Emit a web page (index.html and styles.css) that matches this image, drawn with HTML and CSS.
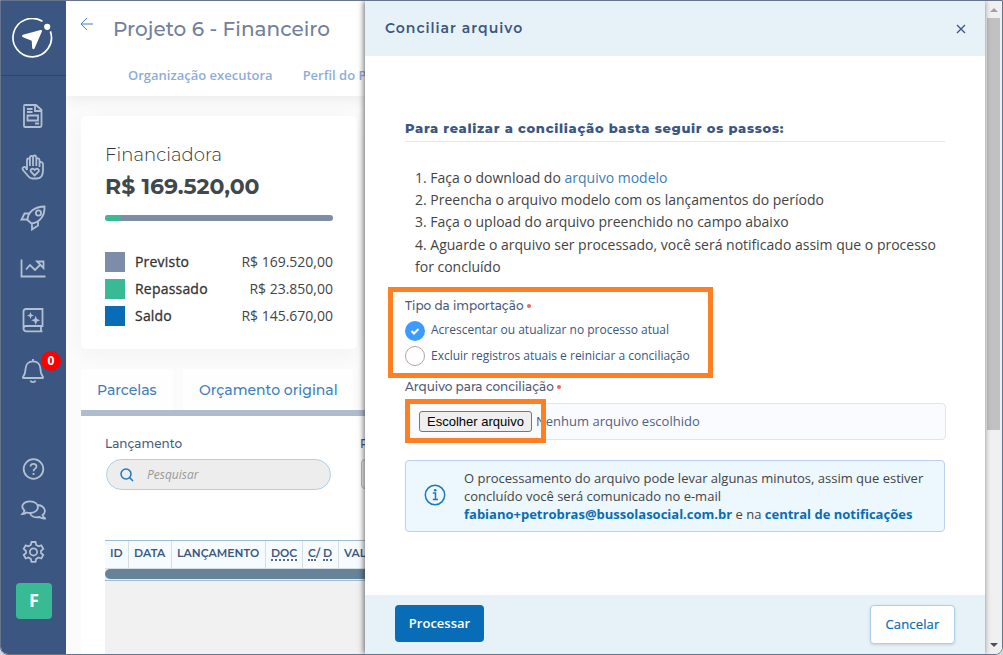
FILE: index.html
```html
<!DOCTYPE html>
<html lang="pt-BR">
<head>
    <meta charset="UTF-8">
    <meta name="viewport" content="width=device-width, initial-scale=1.0">
    <title>Projeto 6 - Financeiro</title>
    <link rel="stylesheet" href="styles.css">
</head>
<body>
<div class="window">
    <nav class="sidebar">
        <a class="logo">
            <svg width="42" height="42" viewBox="0 0 42 42">
                <path d="M30.5 3.4A19.2 19.2 0 1 0 38.4 13.4" fill="none" stroke="#fff" stroke-width="1.7"/>
                <circle cx="35.200" cy="8.800" r="3.1" fill="#fff"/>
                <path d="M30 13.300L22.500 30.500Q21 32.300 20.200 30L19.700 22.800L11 19.200Q9 18 11 16.800L28.500 12Q30.500 11.800 30 13.300Z" fill="#fff"/>
            </svg>
        </a>
        <div class="menu">
            <svg width="26" height="26" viewBox="0 0 26 26"><path d="M4.500 3Q4 3 4 4V23Q4 24 5 24H20Q21.500 24 21.500 22.500V7L16 2H5Q4 2 4 3M15 2V8H21.500M7 6H12.500M7 9H12.500M7.500 12.500H18V17.500H7.500ZM15 20.500H19"/></svg>
            <svg width="26" height="26" viewBox="0 0 26 26"><path d="M7 16V6Q7 4.300 8.400 4.300T9.900 6V12M9.900 6V3.500Q10 2 11.500 2T13 3.500V12M13 3.500Q13.200 1.300 14.700 1.500T16.300 3.500V12M16.300 5.500Q16.500 4 18 4.300T19.500 6V13M19.500 9Q20.500 7.500 21.700 8.200T23 10V16C23 21 21.500 24.500 17 24.500H12.500Q10 24.500 8.500 22.500L3 16Q2 14 3.400 13.200T6 14L7 16M14.700 21.500L10.900 17.700C9.500 15.500 12.500 13.500 14.700 16C17 13.500 20 15.500 18.500 17.700Z"/></svg>
            <svg width="26" height="26" viewBox="0 0 26 26"><path d="M7.500 15C7.500 7 15 1.500 24.500 1.500C25 10 20.500 17.500 11.500 18.500ZM9.500 8.500H4.500L1.500 14.500H7.500M18 16.500V20.500L12 24.500V18.500"/><circle cx="18.500" cy="8" r="2.600"/></svg>
            <svg width="26" height="26" viewBox="0 0 26 26"><path d="M1.500 3.500V20.500H25.500M6 13.500L10 9L15 14L20.500 8.500M17 5.500H23.500V12Z"/></svg>
            <svg width="26" height="26" viewBox="0 0 26 26"><path d="M21 19H6Q3.500 19 3.500 21.500T6 24.300H22.500M3.500 21.500V4.500Q3.500 2 6 2H22.500V19H21V24"/><path class="solid" d="M10.500 5L11.500 7.600L14 8.500L11.500 9.400L10.500 12L9.500 9.400L7 8.500L9.500 7.600ZM15.700 8.800L17 12L20.200 13.300L17 14.600L15.700 18L14.400 14.600L11.200 13.300L14.400 12Z"/></svg>
            <div class="bell">
                <svg width="26" height="26" viewBox="0 0 26 26"><path d="M3.500 20Q2.500 20 3.100 18.800C5.500 16 5.400 13.500 5.600 10.500C5.900 6.500 8.500 3.300 13 3.300S20.100 6.500 20.400 10.500C20.600 13.500 20.500 16 22.900 18.800Q23.500 20 22.500 20ZM13 1V3.300M10.500 22.500C11 24.700 15 24.700 15.500 22.500"/></svg>
                <span class="badge">0</span>
            </div>
        </div>
        <div class="menu menu-bottom">
            <svg width="26" height="26" viewBox="0 0 26 26"><circle cx="13.500" cy="13" r="9.800"/><path d="M10.500 10.500C10.500 7 16.500 7 16.500 10.500C16.500 12.800 13.500 12.500 13.500 15.200M13.500 17V19"/></svg>
            <svg width="26" height="26" viewBox="0 0 26 26"><path d="M4.500 13.500C-0.500 9 4 4.300 10 4.300C20.500 4.300 20.500 16 10 16Q8 16 6.500 15.500C5.500 16.500 4 17 2.500 17Q4 15.500 4.500 13.500ZM18 8C25.500 9 26.500 15.500 22.500 18Q23 20.500 25.500 21.500Q22 22 19.500 20C15 21 11 19.500 10 16"/></svg>
            <svg width="26" height="26" viewBox="0 0 26 26"><path d="M11.500 4H15.500L16.200 7L18.500 8.300L21.300 7.400L23.300 10.900L21 13V15L23.300 17L21.300 20.500L18.500 19.500L16.200 20.900L15.500 23.800H11.500L10.800 20.900L8.500 19.500L5.700 20.500L3.700 17L6 15V13L3.700 10.900L5.700 7.400L8.500 8.300L10.800 7Z"/><circle cx="13.500" cy="13.900" r="3.600"/></svg>
            <span class="avatar">F</span>
        </div>
    </nav>

    <main class="page">
        <header class="page-header">
            <div class="title-row">
                <svg class="back" width="14" height="14" viewBox="0 0 14 14"><path d="M13 7H1M7 1L1 7L7 13"/></svg>
                <h1>Projeto 6 - Financeiro</h1>
            </div>
            <div class="nav-links">
                <a>Organização executora</a>
                <a class="profile-link">Perfil do Projeto</a>
            </div>
        </header>

        <section class="card">
            <h2>Financiadora</h2>
            <strong class="total">R$ 169.520,00</strong>
            <div class="progress"><div class="progress-bar" style="width: 7%"></div></div>
            <ul class="legend">
                <li><i class="planned"></i><b>Previsto</b><span>R$ 169.520,00</span></li>
                <li><i class="transferred"></i><b>Repassado</b><span>R$ 23.850,00</span></li>
                <li><i class="balance"></i><b>Saldo</b><span>R$ 145.670,00</span></li>
            </ul>
        </section>

        <div class="tabs">
            <a class="tab-first">Parcelas</a>
            <a class="tab-second">Orçamento original</a>
        </div>

        <section class="entries">
            <div class="filters">
                <div class="filter">
                    <label>Lançamento</label>
                    <div class="search">
                        <svg width="14" height="14" viewBox="0 0 14 14"><circle cx="6" cy="6" r="5"/><path d="M9.700 9.700L13 13"/></svg>
                        <span>Pesquisar</span>
                    </div>
                </div>
                <div class="filter">
                    <label>Período</label>
                    <div class="period"></div>
                </div>
            </div>
            <div class="table">
                <div class="table-head">
                    <span class="c-id">ID</span>
                    <span class="c-date">DATA</span>
                    <span class="c-entry">LANÇAMENTO</span>
                    <span class="c-doc"><abbr>DOC</abbr></span>
                    <span class="c-cd"><abbr>C</abbr>/ <abbr>D</abbr></span>
                    <span class="c-value">VALOR</span>
                </div>
                <div class="table-scroll"><div></div></div>
            </div>
        </section>
    </main>

    <aside class="drawer">
        <header class="drawer-header">
            <h3>Conciliar arquivo</h3>
            <svg width="10" height="10" viewBox="0 0 10 10"><path d="M1 1L9 9M9 1L1 9"/></svg>
        </header>
        <div class="drawer-body">
            <h4>Para realizar a conciliação basta seguir os passos:</h4>
            <div class="steps">
                <p>1. Faça o download do <a>arquivo modelo</a></p>
                <p>2. Preencha o arquivo modelo com os lançamentos do período</p>
                <p>3. Faça o upload do arquivo preenchido no campo abaixo</p>
                <p>4. Aguarde o arquivo ser processado, você será notificado assim que o processo for concluído</p>
            </div>
            <div class="import-type">
                <div class="field-label">Tipo da importação<i></i></div>
                <div class="radio">
                    <svg width="20" height="20" viewBox="0 0 20 20"><circle cx="10" cy="10" r="10" fill="#3d9bfd"/><path d="M6.500 10L9 12.500L13.500 8" fill="none" stroke="#fff" stroke-width="2"/></svg>
                    <span>Acrescentar ou atualizar no processo atual</span>
                </div>
                <div class="radio">
                    <svg width="20" height="20" viewBox="0 0 20 20"><circle cx="10" cy="10" r="9.500" fill="#fff" stroke="#b1a4a8"/></svg>
                    <span class="option-reset">Excluir registros atuais e reiniciar a conciliação</span>
                </div>
            </div>
            <div class="field-label file-label">Arquivo para conciliação<i></i></div>
            <div class="file">
                <button class="choose">Escolher arquivo</button>
                <span>Nenhum arquivo escolhido</span>
            </div>
            <div class="notice">
                <svg width="22" height="22" viewBox="0 0 22 22"><circle cx="11" cy="11" r="9.700"/><path d="M8.800 9H11.500V15.500M8.800 15.500H14"/><circle class="dot" cx="11.200" cy="6.200" r="1.300"/></svg>
                <p>O processamento do arquivo pode levar algunas minutos, assim que estiver concluído você será comunicado no e-mail<br><b>fabiano+petrobras@bussolasocial.com.br</b> e na <b>central de notificações</b></p>
            </div>
        </div>
        <footer class="drawer-footer">
            <button class="btn btn-primary">Processar</button>
            <button class="btn btn-cancel">Cancelar</button>
        </footer>
    </aside>

    <div class="scrollbar">
        <i class="arrow-up"></i>
        <div class="thumb"></div>
        <i class="arrow-down"></i>
    </div>
</div>
</body>
</html>
```
FILE: styles.css
```css
*, *::after {
    box-sizing: border-box;
}
body {
    margin: 0;
    background: #d5d9df;
    font-family: "Open Sans", sans-serif;
    color: #444;
}
h1, h2, h3, h4, p, ul {
    margin: 0;
    padding: 0;
}
button {
    font-family: inherit;
    padding: 0;
}
.window {
    display: flex;
    width: 1003px;
    height: 655px;
    border: 1px solid #66758d;
    border-radius: 0 0 8px 8px;
    overflow: hidden;
    background: #fff;
}

/* sidebar */
.sidebar {
    width: 65px;
    flex: none;
    display: flex;
    flex-direction: column;
    background: #3b5680;
}
.logo {
    height: 75px;
    padding: 17px 0 0 11px;
    border-bottom: 1px solid #2b4673;
}
.menu {
    display: flex;
    flex-direction: column;
    gap: 25px;
    padding: 27px 0 0 19px;
}
.menu svg {
    display: block;
    fill: none;
    stroke: #b3bfd2;
    stroke-width: 1.800;
}
.menu .solid {
    fill: #b3bfd2;
    stroke: none;
}
.bell {
    position: relative;
}
.badge {
    position: absolute;
    left: 21px;
    top: -7px;
    width: 20px;
    height: 20px;
    border-radius: 50%;
    background: #f00;
    color: #fff;
    font-size: 12px;
    font-weight: 700;
    line-height: 19px;
    text-align: center;
}
.menu-bottom {
    gap: 15px;
    padding-top: 72px;
}
.avatar {
    width: 36px;
    height: 36px;
    margin: 4px 0 0 -4px;
    border-radius: 4px;
    background: #38bb94;
    color: #fff;
    font-size: 18px;
    font-weight: 700;
    line-height: 35px;
    text-align: center;
}

/* page behind the drawer */
.page {
    width: 299px;
    flex: none;
    overflow: hidden;
    background: #fbfbfb;
}
.page-header {
    height: 95px;
    background: #fff;
    box-shadow: 0 2px 14px rgba(0, 0, 0, 0.08);
}
.title-row {
    display: flex;
    height: 57px;
    padding-left: 14px;
}
.back {
    margin-top: 16px;
    fill: none;
    stroke: #3f80bd;
}
h1 {
    margin-left: 19px;
    font: 500 20px/56px Montserrat, Inter, sans-serif;
    color: #71809e;
    letter-spacing: 0.020px;
    white-space: nowrap;
}
.nav-links {
    display: flex;
    padding-left: 62px;
    font-size: 13px;
    font-weight: 600;
    line-height: 35px;
    color: #8eaddb;
    white-space: nowrap;
}
.profile-link {
    margin-left: 30px;
}
.card {
    width: 276px;
    height: 233px;
    margin: 20px 0 0 15px;
    padding: 26px 24px 0;
    border-radius: 5px;
    background: #fff;
    box-shadow: 0 5px 22px rgba(0, 0, 0, 0.04);
}
h2 {
    font: 300 18px/26px Montserrat, Inter, sans-serif;
    color: #333;
    letter-spacing: 0.100px;
}
.total {
    display: block;
    font: 700 22px/37px Montserrat, Inter, sans-serif;
    color: #3f484c;
}
.progress {
    height: 6px;
    margin-top: 10px;
    border-radius: 3px;
    overflow: hidden;
    background: #7d8ca9;
}
.progress-bar {
    height: 6px;
    border-radius: 3px;
    background: #38bb94;
}
.legend {
    margin-top: 27px;
    list-style: none;
    font-size: 14px;
}
.legend li {
    display: flex;
    align-items: center;
    height: 27px;
}
.legend i {
    width: 20px;
    height: 20px;
    margin-right: 10px;
}
.legend b {
    font-weight: 500;
    color: #333;
    letter-spacing: 0.200px;
    -webkit-text-stroke: 0.300px #333;
    flex: 1;
}
.planned {
    background: #7d8ca9;
}
.transferred {
    background: #38bb94;
}
.balance {
    background: #086db6;
}
.tabs {
    display: flex;
    gap: 10px;
    height: 47px;
    margin: 20px 0 0 15px;
    border-bottom: 6px solid #afbccd;
    font: 500 14px/42px Montserrat, Inter, sans-serif;
    color: #3e80bb;
    white-space: nowrap;
}
.tabs a {
    padding-left: 16px;
    background: #fefefe;
}
.tab-first {
    width: 92px;
}
.tab-second {
    width: 170px;
}
.entries {
    height: 239px;
    margin-left: 15px;
    padding: 18px 0 0 24px;
    background: #fff;
}
.filters {
    display: flex;
    gap: 30px;
}
.filter label {
    display: block;
    height: 25px;
    font: 500 12px/19px Montserrat, Inter, sans-serif;
    color: #4b5c7b;
}
.filter + .filter label {
    margin-left: -1px;
}
.search {
    display: flex;
    align-items: center;
    width: 225px;
    height: 31px;
    margin-left: 1px;
    padding-left: 13px;
    border: 1px solid #aed0e6;
    border-radius: 16px;
    background: #ededed;
    font-size: 12px;
    font-style: italic;
    color: #999;
}
.search svg {
    margin-right: 13px;
    fill: none;
    stroke: #1d79bd;
    stroke-width: 1.500;
}
.period {
    width: 100px;
    height: 30px;
    border: 1px solid #bbb;
    border-radius: 4px;
    background: #ededed;
}
.table {
    width: 600px;
    height: 120px;
    margin-top: 50px;
    border-top: 1px solid #9fbad3;
    background: #f1f1f1;
}
.table-head {
    display: flex;
    height: 28px;
    border-bottom: 1px solid #d7dfe3;
    background: #f5fbff;
    font: 600 11px/25px Montserrat, Inter, sans-serif;
    color: #3b5680;
    white-space: nowrap;
}
.table-head span {
    padding-left: 5px;
    border-right: 1px solid #d4e0e4;
}
.table-head abbr {
    display: inline-block;
    height: 20px;
    line-height: 25px;
    vertical-align: top;
    border-bottom: 2px dotted #59698b;
}
.c-id {
    width: 24px;
}
.c-date {
    width: 43px;
}
.c-entry {
    width: 94px;
}
.c-doc {
    width: 37px;
}
.c-cd {
    width: 36px;
}
.c-value {
    width: 80px;
}
.table-scroll {
    height: 12px;
    border-bottom: 1px solid #9fbad3;
    background: #e8eeee;
}
.table-scroll div {
    height: 10px;
    border-radius: 5px;
    background: #66839a;
}

/* drawer */
.drawer {
    display: flex;
    flex-direction: column;
    width: 620px;
    flex: none;
    z-index: 1;
    background: #fff;
    box-shadow: -1px 0 6px rgba(0, 0, 0, 0.6);
}
.drawer-header {
    display: flex;
    align-items: center;
    justify-content: space-between;
    height: 55px;
    padding: 0 19px 0 20px;
    background: #e7f2f8;
}
.drawer-header svg {
    fill: none;
    stroke: #3b5680;
    stroke-width: 1.300;
}
h3 {
    font: 600 14px/20px Montserrat, Inter, sans-serif;
    color: #3b5680;
    letter-spacing: 1px;
    padding-bottom: 2px;
}
.drawer-body {
    flex: 1;
    padding: 62px 40px 0;
}
h4 {
    height: 24px;
    border-bottom: 1px solid #e0ebf1;
    font: 800 13px/21px Montserrat, Inter, sans-serif;
    color: #3b5680;
    letter-spacing: 0.700px;
    white-space: nowrap;
}
.steps {
    padding: 25px 0 0 10px;
    font-size: 14px;
    line-height: 22.200px;
}
.steps a {
    color: #3a7fba;
}
.import-type {
    width: 325px;
    height: 91px;
    margin: 9px 0 0 -17px;
    padding: 4px 12px 0;
    border: 5px solid #ff8022;
    color: #3b5680;
}
.field-label {
    display: flex;
    align-items: center;
    height: 20px;
    font: 500 12px/20px Montserrat, Inter, sans-serif;
    color: #4b5c7b;
}
.field-label i {
    width: 4px;
    height: 4px;
    margin-left: 3px;
    border-radius: 50%;
    background: #f06464;
}
.radio {
    display: flex;
    gap: 6px;
    height: 25px;
    padding-top: 5px;
    font-size: 12px;
    line-height: 18px;
    white-space: nowrap;
}
.option-reset {
    line-height: 20px;
}
.file-label {
    margin: -1px 0 6px;
}
.file {
    position: relative;
    display: flex;
    align-items: center;
    width: 541px;
    height: 37px;
    padding-left: 13px;
    border: 1px solid #dfe4ef;
    border-radius: 4px;
    background: #fafbff;
    font-size: 13px;
    color: #4e6284;
}
.file span {
    padding-bottom: 2px;
}
.file::after {
    content: "";
    position: absolute;
    left: -1px;
    top: -5px;
    width: 141px;
    height: 44px;
    border: 5px solid #ff8022;
}
.choose {
    width: 113px;
    height: 21px;
    margin-right: 4px;
    border: 1px solid #767676;
    border-radius: 3px;
    background: #efefef;
    color: #000;
    font: 13px "Liberation Sans", Arial, sans-serif;
}
.notice {
    display: flex;
    align-items: center;
    height: 72px;
    margin-top: 20px;
    padding: 0 16px 0 18px;
    border: 1px solid #b9d2ee;
    border-radius: 4px;
    background: #edf7fe;
    font-size: 13px;
    line-height: 18px;
}
.notice svg {
    flex: none;
    margin: 0 18px 2px 0;
    fill: none;
    stroke: #1d79bd;
    stroke-width: 1.500;
}
.notice .dot {
    fill: #1d79bd;
    stroke: none;
}
.notice b {
    color: #086db6;
}
.drawer-footer {
    display: flex;
    justify-content: space-between;
    height: 59px;
    padding: 10px 30px 0;
    background: #e7f2f8;
}
.btn {
    padding-bottom: 2px;
    border-radius: 4px;
    font-size: 13px;
}
.btn-primary {
    width: 89px;
    height: 37px;
    border: none;
    background: #086db6;
    color: #fff;
    font-weight: 600;
}
.btn-cancel {
    width: 85px;
    height: 39px;
    border: 1px solid #aed0e6;
    background: #fff;
    box-shadow: 0 1px 3px rgba(0, 0, 0, 0.15);
    color: #086db6;
    font-weight: 500;
    letter-spacing: 0.150px;
    -webkit-text-stroke: 0.200px #086db6;
}

/* window scrollbar */
.scrollbar {
    display: flex;
    flex-direction: column;
    align-items: center;
    width: 17px;
    flex: none;
    background: #f0f0f0;
}
.thumb {
    width: 13px;
    height: 412px;
    margin-top: 6px;
    background: #c1c1c1;
}
.arrow-up {
    margin-top: 7px;
    border: 4px solid transparent;
    border-top: 0;
    border-bottom-color: #a3a3a3;
}
.arrow-down {
    margin: auto 0 7px;
    border: 4px solid transparent;
    border-bottom: 0;
    border-top-color: #505050;
}
```
